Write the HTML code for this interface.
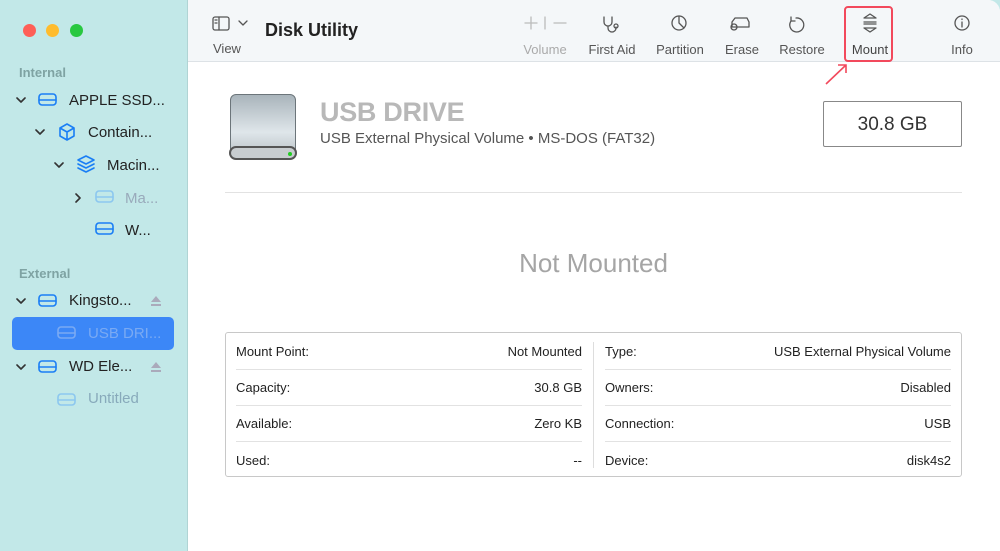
<html><head><style>
body{margin:0;width:1000px;height:551px;background:#c2e8e8;font-family:"Liberation Sans",sans-serif;position:relative;overflow:hidden}
.a{position:absolute}
.sb{left:0;top:0;width:187px;height:551px;background:#c2e8e8;border-right:1px solid #b0d4d4;border-top-left-radius:10px}
.main{left:188px;top:0;width:812px;height:551px;background:#fff;border-top-right-radius:12px}
.tb{left:188px;top:0;width:812px;height:61px;background:#f4f7f9;border-bottom:1px solid #dde2e6;border-top-right-radius:12px}
.t{font-size:15px;color:#222;white-space:nowrap}
.h{font-size:13px;color:#7fa3a3;font-weight:bold}
.lbl{font-size:13px;color:#555;text-align:center;width:80px}
.row{font-size:13px;color:#222}
.line{height:1px;background:#e2e2e2}
</style></head><body>
<div class="a sb"></div>
<div class="a" style="left:23px;top:24px;width:13px;height:13px;border-radius:50%;background:#fe5f57"></div>
<div class="a" style="left:46px;top:24px;width:13px;height:13px;border-radius:50%;background:#febc2e"></div>
<div class="a" style="left:70px;top:24px;width:13px;height:13px;border-radius:50%;background:#28c840"></div>
<div class="a h" style="left:19px;top:65px">Internal</div>
<div class="a h" style="left:19px;top:266px">External</div>
<div class="a" style="left:12px;top:317px;width:162px;height:33px;background:#3c87f7;border-radius:5px"></div>
<svg class="a" style="left:0;top:0" width="187" height="420" fill="none" stroke-width="1.6" stroke-linecap="round" stroke-linejoin="round">
<g stroke="#333"><path d="M17 98l4 4 4-4M36 130l4 4 4-4M55 163l4 4 4-4M76 194l4 4-4 4M17 299l4 4 4-4M17 365l4 4 4-4"/></g>
<g stroke="#1a7ef5"><rect x="39" y="94" width="17" height="11" rx="3"/><path d="M39 100h17"/>
<path d="M67 124l7 4v8l-7 4-7-4v-8zM60 128l7 4 7-4M67 132v8"/>
<path d="M86 156l8 4-8 4-8-4zM78 164l8 4 8-4M78 168l8 4 8-4"/>
<rect x="96" y="223" width="17" height="11" rx="3"/><path d="M96 229h17"/>
<rect x="39" y="295" width="17" height="11" rx="3"/><path d="M39 301h17"/>
<rect x="39" y="361" width="17" height="11" rx="3"/><path d="M39 367h17"/></g>
<g stroke="#8cc7ef"><rect x="96" y="191" width="17" height="11" rx="3"/><path d="M96 197h17"/>
<rect x="58" y="394" width="17" height="11" rx="3"/><path d="M58 400h17"/></g>
<g stroke="#7aaaf3"><rect x="58" y="327" width="17" height="11" rx="3"/><path d="M58 333h17"/></g>
<g fill="#aab" stroke="none"><path d="M151 302l5-6 5 6zM151 304h10v2h-10zM151 368l5-6 5 6zM151 370h10v2h-10z"/></g>
</svg>
<div class="a t" style="left:69px;top:92px">APPLE SSD...</div>
<div class="a t" style="left:88px;top:124px">Contain...</div>
<div class="a t" style="left:107px;top:157px">Macin...</div>
<div class="a t" style="left:125px;top:190px;color:#9ab">Ma...</div>
<div class="a t" style="left:125px;top:222px">W...</div>
<div class="a t" style="left:69px;top:292px">Kingsto...</div>
<div class="a t" style="left:88px;top:325px;color:#7aaaf3">USB DRI...</div>
<div class="a t" style="left:69px;top:358px">WD Ele...</div>
<div class="a t" style="left:88px;top:390px;color:#8ab">Untitled</div>

<div class="a main"></div>
<div class="a tb"></div>
<svg class="a" style="left:188px;top:0" width="812" height="62" fill="none" stroke="#555" stroke-width="1.3" stroke-linecap="round" stroke-linejoin="round">
<rect x="25" y="17" width="16" height="13" rx="2"/><path d="M31 17v13M27 20h2M27 23h2"/><path d="M51 21l4 4 4-4"/>
<g stroke="#bbb"><path d="M337 23h12M343 17v12M357 17v12M366 23h12"/></g>
<path d="M416 17v5a4 4 0 008 0v-5M420 26v2a4 4 0 008 0v-1"/><circle cx="428" cy="26" r="2"/>
<circle cx="491" cy="23" r="7"/><path d="M491 16v7l5 5"/>
<path d="M544 22l3-4h12l2 4v5h-17z"/><circle cx="546" cy="27" r="3"/>
<path d="M608 18a7 7 0 11-5 3M603 17v4h4"/>
<path d="M676 18l6-4 6 4zM676 28l6 4 6-4zM676 22h12M676 24h12"/>
<circle cx="774" cy="23" r="7"/><path d="M774 22v5M774 19v.5"/>
</svg>
<div class="a" style="left:213px;top:41px;font-size:13px;color:#555">View</div>
<div class="a" style="left:265px;top:20px;font-size:18px;font-weight:bold;color:#222">Disk Utility</div>
<div class="a lbl" style="left:505px;top:42px;color:#aaa">Volume</div>
<div class="a lbl" style="left:572px;top:42px">First Aid</div>
<div class="a lbl" style="left:640px;top:42px">Partition</div>
<div class="a lbl" style="left:702px;top:42px">Erase</div>
<div class="a lbl" style="left:762px;top:42px">Restore</div>
<div class="a lbl" style="left:830px;top:42px;color:#444">Mount</div>
<div class="a lbl" style="left:922px;top:42px">Info</div>
<div class="a" style="left:844px;top:6px;width:49px;height:56px;border:2.5px solid #f2495c;border-radius:4px;box-sizing:border-box"></div>
<svg class="a" style="left:820px;top:60px" width="40" height="30"><path d="M6 24L26 5M18 5h8v8" stroke="#f2495c" stroke-width="1.6" fill="none"/></svg>

<div class="a" style="left:230px;top:94px;width:66px;height:64px;border-radius:6px;background:linear-gradient(#a9b4bb,#dfe6ea 60%,#b8c0c5);border:1px solid #6c757a;box-sizing:border-box"></div>
<div class="a" style="left:229px;top:146px;width:68px;height:14px;border-radius:7px;background:#c8cdd0;border:2px solid #555;box-sizing:border-box"></div>
<div class="a" style="left:288px;top:152px;width:4px;height:4px;border-radius:50%;background:#2c2"></div>
<div class="a" style="left:320px;top:97px;font-size:27px;font-weight:bold;color:#b8b8b8;letter-spacing:-0.3px">USB DRIVE</div>
<div class="a" style="left:320px;top:130px;font-size:15px;color:#555">USB External Physical Volume • MS-DOS (FAT32)</div>
<div class="a" style="left:823px;top:101px;width:139px;height:46px;border:1px solid #888;box-sizing:border-box;border-radius:2px;font-size:19px;color:#333;text-align:center;line-height:46px">30.8 GB</div>
<div class="a line" style="left:225px;top:192px;width:737px"></div>
<div class="a" style="left:225px;top:248px;width:737px;text-align:center;font-size:26px;color:#a5a5a5">Not Mounted</div>

<div class="a" style="left:225px;top:332px;width:737px;height:145px;border:1px solid #c8c8c8;box-sizing:border-box;border-radius:3px"></div>
<div class="a" style="left:593px;top:342px;width:1px;height:126px;background:#ddd"></div>
<div class="a line" style="left:236px;top:369px;width:346px"></div><div class="a line" style="left:605px;top:369px;width:346px"></div>
<div class="a line" style="left:236px;top:405px;width:346px"></div><div class="a line" style="left:605px;top:405px;width:346px"></div>
<div class="a line" style="left:236px;top:441px;width:346px"></div><div class="a line" style="left:605px;top:441px;width:346px"></div>
<div class="a row" style="left:236px;top:344px">Mount Point:</div><div class="a row" style="left:382px;width:200px;text-align:right;top:344px">Not Mounted</div>
<div class="a row" style="left:236px;top:380px">Capacity:</div><div class="a row" style="left:382px;width:200px;text-align:right;top:380px">30.8 GB</div>
<div class="a row" style="left:236px;top:416px">Available:</div><div class="a row" style="left:382px;width:200px;text-align:right;top:416px">Zero KB</div>
<div class="a row" style="left:236px;top:453px">Used:</div><div class="a row" style="left:382px;width:200px;text-align:right;top:453px">--</div>
<div class="a row" style="left:605px;top:344px">Type:</div><div class="a row" style="left:651px;width:300px;text-align:right;top:344px">USB External Physical Volume</div>
<div class="a row" style="left:605px;top:380px">Owners:</div><div class="a row" style="left:651px;width:300px;text-align:right;top:380px">Disabled</div>
<div class="a row" style="left:605px;top:416px">Connection:</div><div class="a row" style="left:651px;width:300px;text-align:right;top:416px">USB</div>
<div class="a row" style="left:605px;top:453px">Device:</div><div class="a row" style="left:651px;width:300px;text-align:right;top:453px">disk4s2</div>
</body></html>
